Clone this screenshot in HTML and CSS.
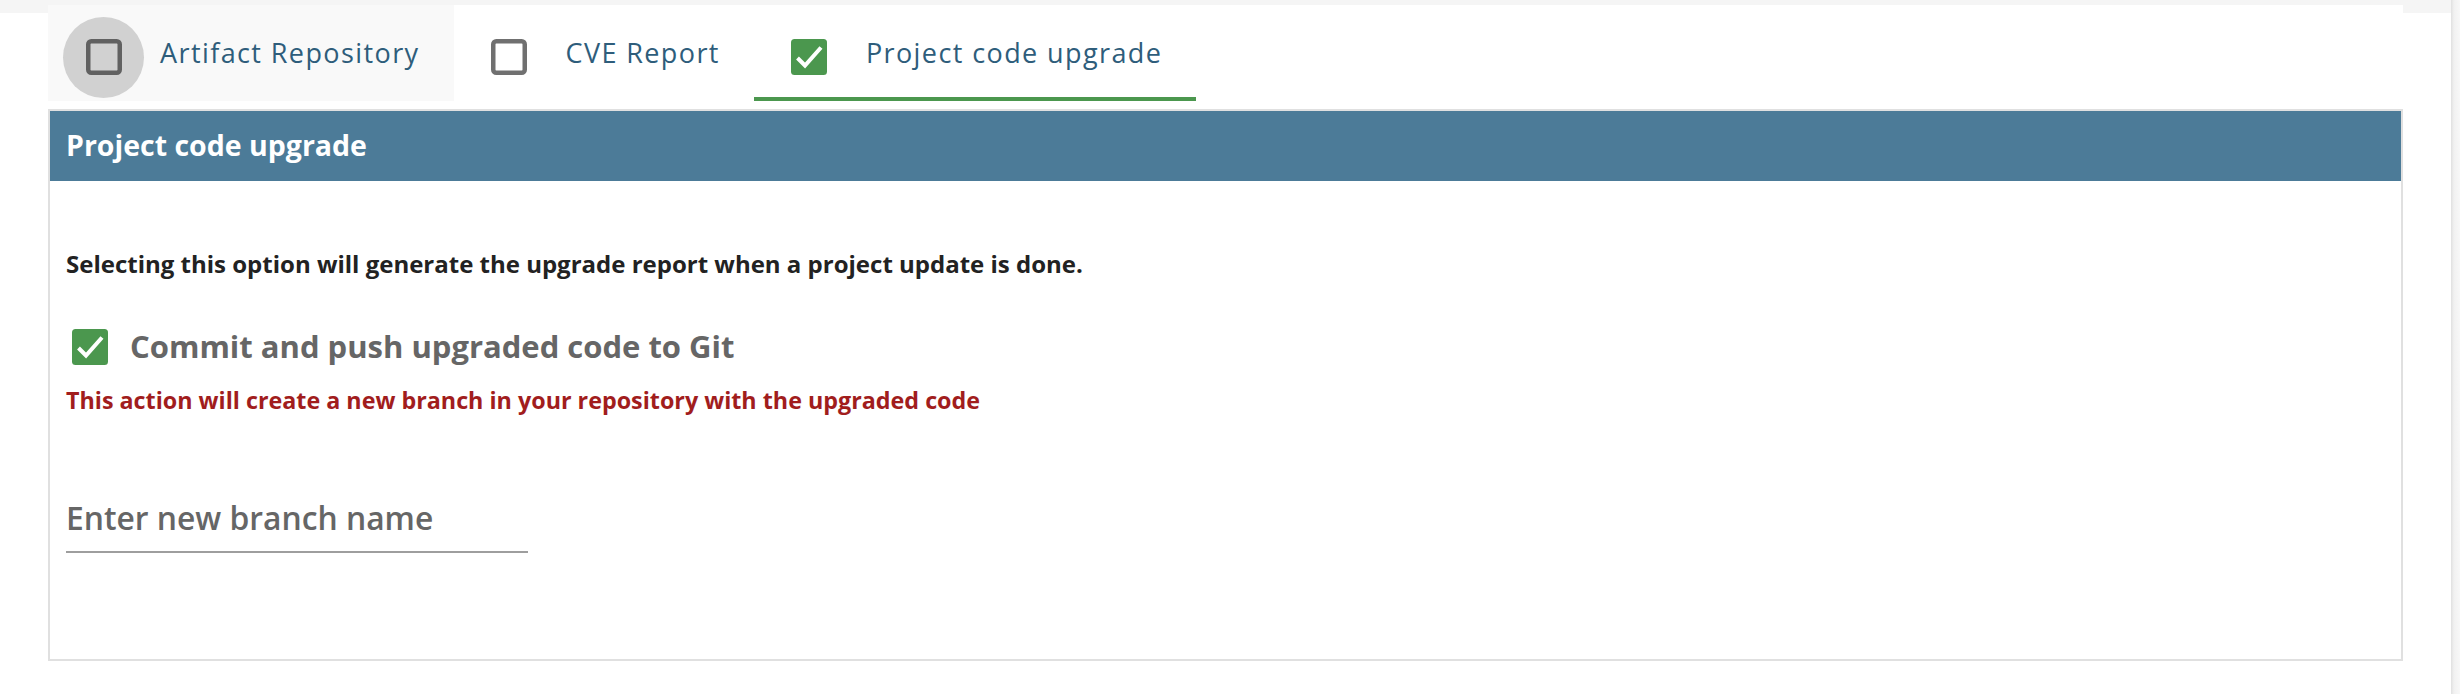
FILE: index.html
```html
<!DOCTYPE html>
<html lang="en">
<head>
  <meta charset="UTF-8">
  <title>Project code upgrade</title>
  <link rel="stylesheet" href="styles.css">
</head>
<body>

<div class="main">
  <div class="tabs">
    <div class="tab tab-hover">
      <span class="tab-icon">
        <svg class="box" viewBox="0 0 36 36"><rect x="2.25" y="2.25" width="31.5" height="31.5" rx="3" fill="none" stroke="#616161" stroke-width="4.5"/></svg>
      </span>
      <span class="tab-label">Artifact Repository</span>
    </div>
    <div class="tab">
      <span class="tab-icon">
        <svg class="box" viewBox="0 0 36 36"><rect x="2.25" y="2.25" width="31.5" height="31.5" rx="3" fill="none" stroke="#707070" stroke-width="4.5"/></svg>
      </span>
      <span class="tab-label">CVE Report</span>
    </div>
    <div class="tab active">
      <span class="tab-icon">
        <svg class="box" viewBox="0 0 36 36"><rect width="36" height="36" rx="3.5" fill="#4b974e"/><polyline points="6.5,19 14,26.5 30,8.5" fill="none" stroke="#fff" stroke-width="4"/></svg>
      </span>
      <span class="tab-label">Project code upgrade</span>
    </div>
  </div>

  <div class="panel">
    <div class="panel-header">Project code upgrade</div>
    <div class="panel-body">
      <p class="intro">Selecting this option will generate the upgrade report when a project update is done.</p>

      <label class="commit-row">
        <svg class="box" viewBox="0 0 36 36"><rect width="36" height="36" rx="3.5" fill="#4b974e"/><polyline points="6.5,19 14,26.5 30,8.5" fill="none" stroke="#fff" stroke-width="4"/></svg>
        <span>Commit and push upgraded code to Git</span>
      </label>
      <p class="warn">This action will create a new branch in your repository with the upgraded code</p>

      <input class="branch" type="text" placeholder="Enter new branch name">
    </div>
  </div>
</div>
<div class="gutter"></div>

</body>
</html>
```

FILE: styles.css
```css
* {
  box-sizing: border-box;
}

body {
  margin: 0;
  font-family: "Open Sans", "Noto Sans", Inter, sans-serif;
  display: flex;
  height: 100vh;
  background: #fff;
}

.main {
  flex: 1;
  padding: 5px 48px 0 48px;
  background: linear-gradient(#f5f5f5 13px, #fff 13px);
}

.gutter {
  width: 9px;
  background: linear-gradient(to right, #e0e0e0, #f1f1f1 3px, #f8f8f8);
}

.tabs {
  display: flex;
  height: 96px;
  background: #fff;
}

.tab {
  display: flex;
  align-items: center;
  gap: 16px;
  padding: 4px 34px 0 15px;
  border-bottom: 4px solid transparent;
}

.tab-hover {
  background: #f9f9f9;
}

.tab.active {
  border-bottom-color: #4b974e;
}

.tab-icon {
  width: 81px;
  height: 81px;
  margin-top: 8px;
  border-radius: 50%;
  display: flex;
  align-items: center;
  justify-content: center;
}

.tab-hover .tab-icon {
  background: #d1d1d1;
}

.box {
  width: 36px;
  height: 36px;
  flex: none;
  display: block;
}

.tab-label {
  font-size: 27px;
  line-height: 1.2;
  letter-spacing: 1.4px;
  color: #2e5d7b;
}

.panel {
  margin-top: 8px;
  border: 2px solid #e0e0e0;
}

.panel-header {
  height: 70px;
  display: flex;
  align-items: center;
  padding: 0 0 2px 16px;
  background: #4c7b98;
  color: #fff;
  font-size: 28.5px;
  font-weight: 700;
}

.panel-body {
  padding: 69px 16px 106px;
}

.intro {
  margin: 0;
  font-size: 24px;
  line-height: 1.2;
  font-weight: 700;
  color: #222;
}

.commit-row {
  display: flex;
  align-items: center;
  gap: 22px;
  height: 36px;
  margin-top: 50.6px;
  padding-left: 6px;
  font-size: 31px;
  font-weight: 700;
  color: #666;
}

.commit-row span {
  line-height: 36px;
  margin-bottom: 3px;
}

.warn {
  margin: 22px 0 0;
  font-size: 23.3px;
  line-height: 1.2;
  font-weight: 700;
  color: #a11d1d;
}

.branch {
  display: block;
  width: 462px;
  height: 53.9px;
  margin-top: 83.5px;
  padding: 0 0 14.7px;
  border: none;
  border-bottom: 2px solid #9e9e9e;
  outline: none;
  background: transparent;
  font-family: inherit;
  font-size: 31.8px;
  line-height: 1.2;
  font-weight: 600;
  color: #666;
}

.branch::placeholder {
  color: #666;
  opacity: 1;
}
```
